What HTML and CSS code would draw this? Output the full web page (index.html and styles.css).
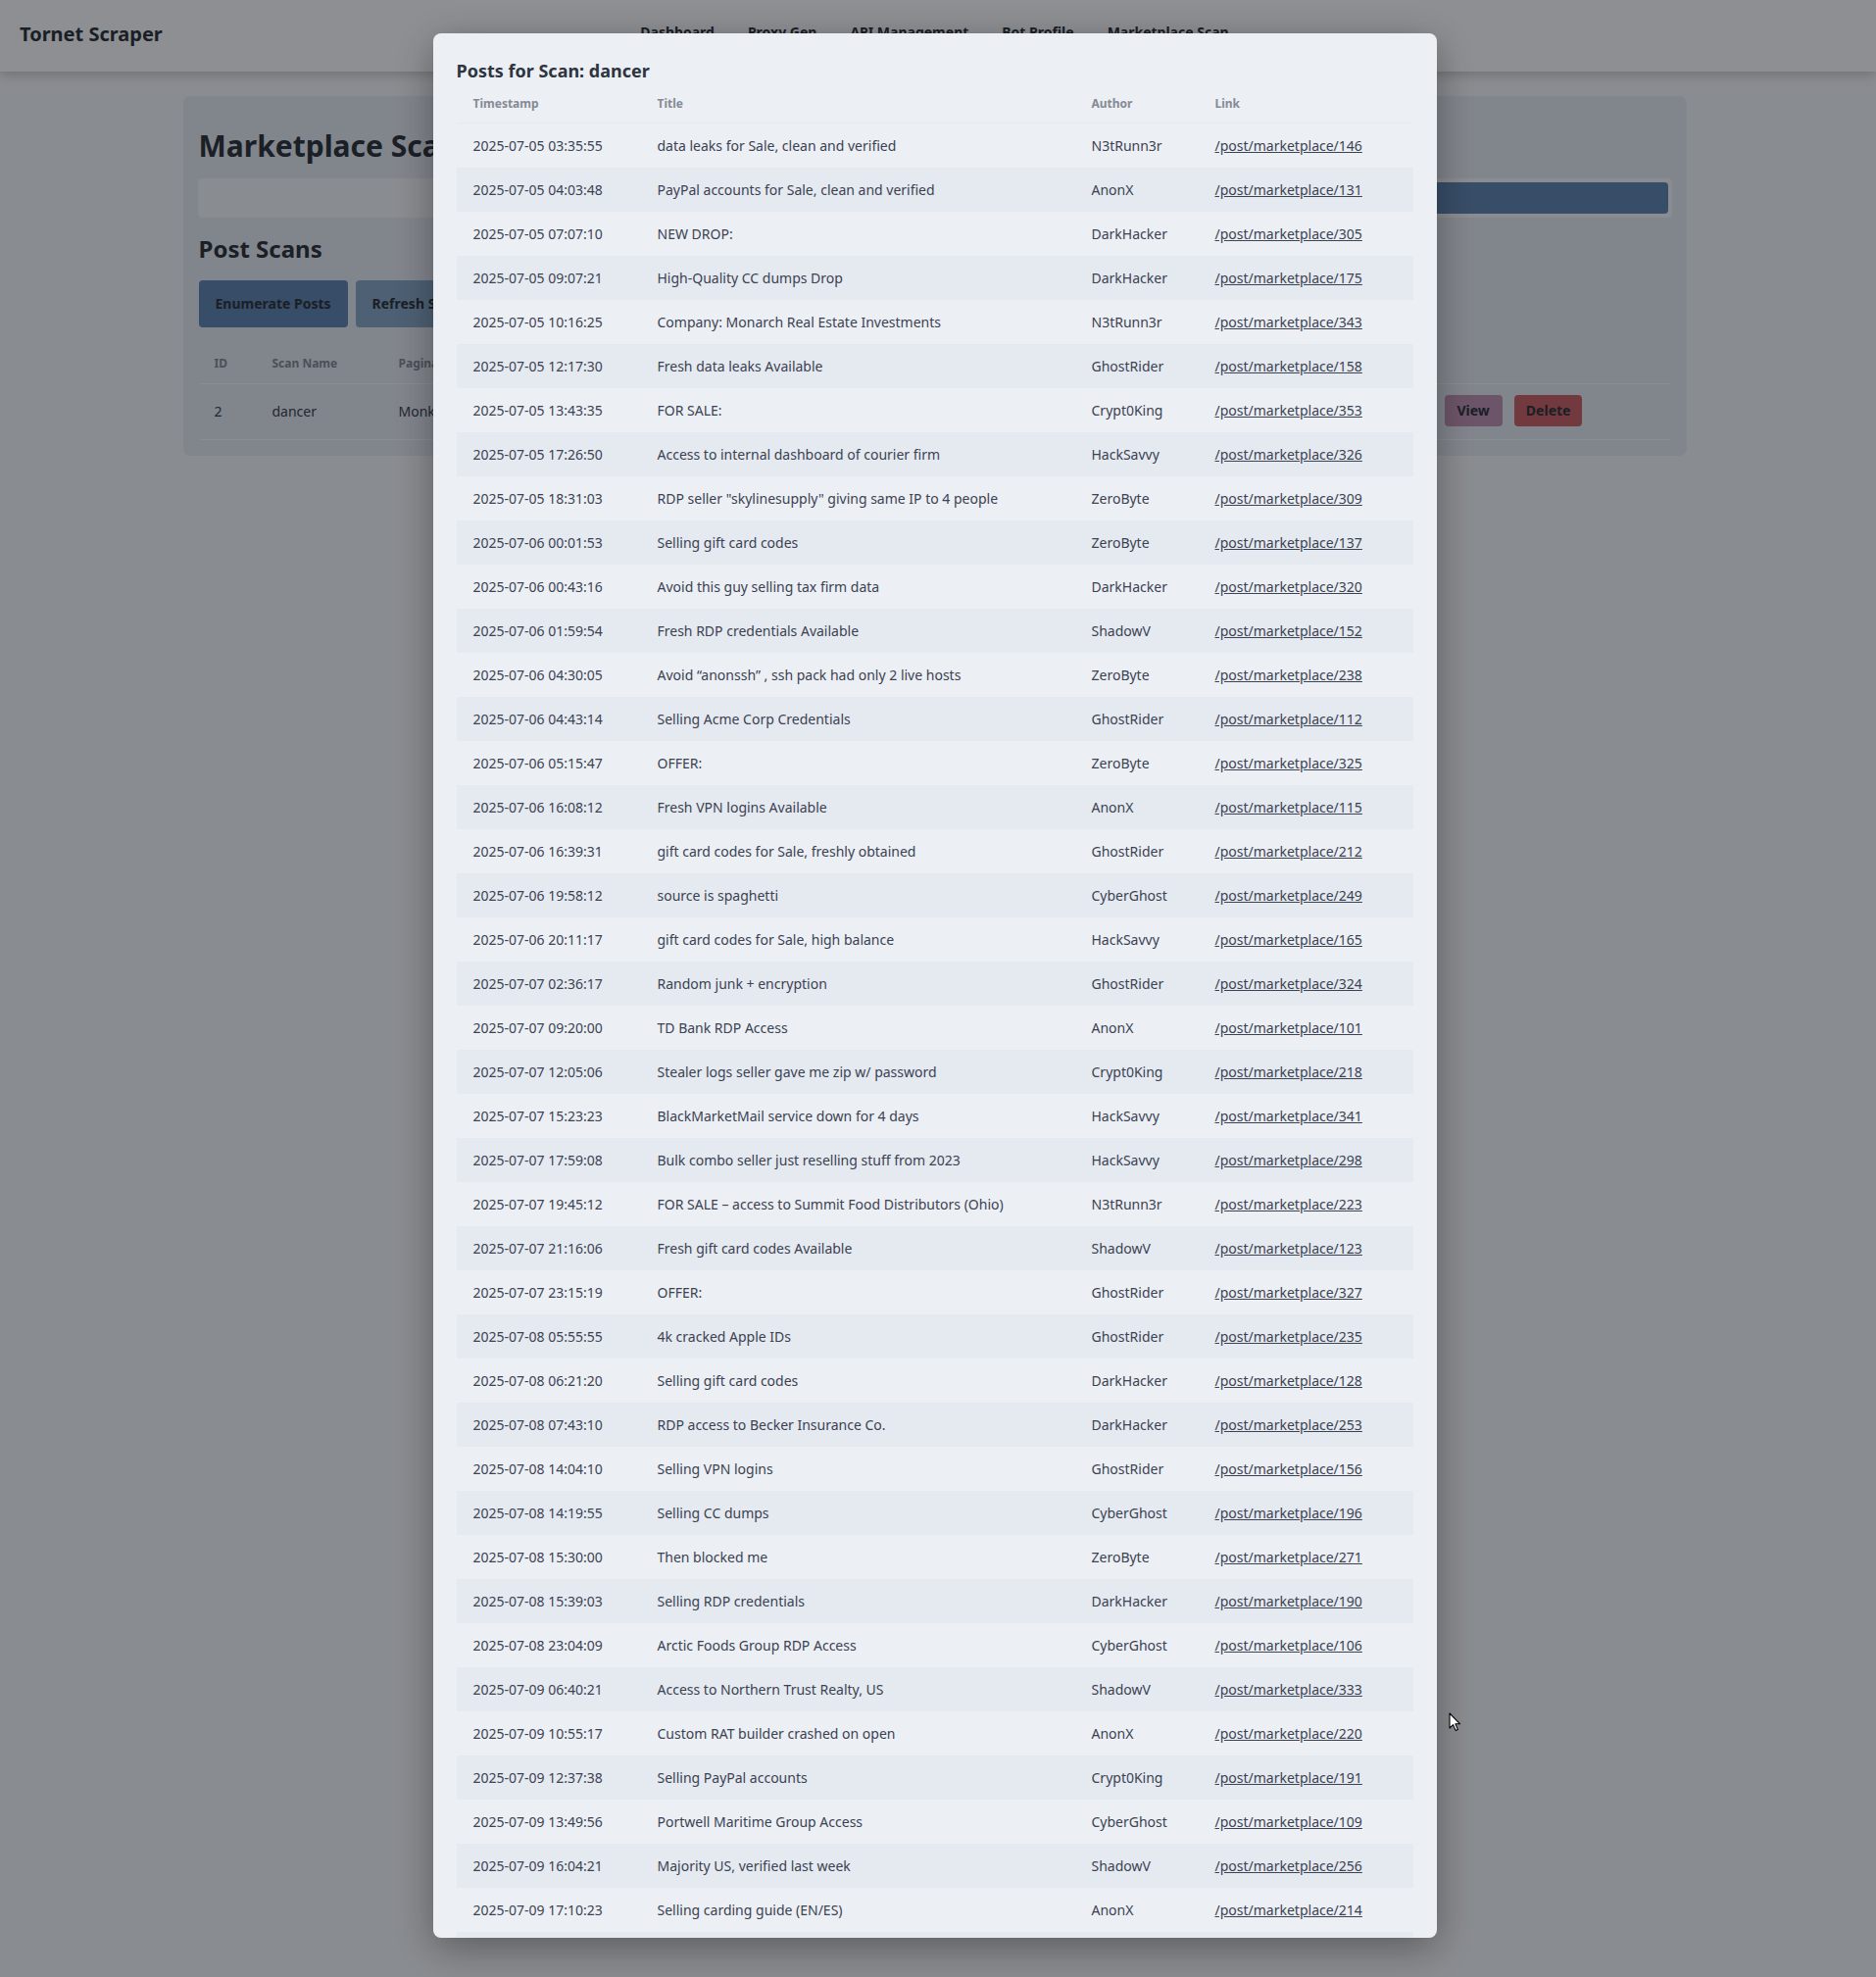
FILE: index.html
```html
<!DOCTYPE html>
<html lang="en">
<head>
<meta charset="utf-8">
<title>Tornet Scraper - Marketplace Scan</title>
<link rel="stylesheet" href="styles.css">
</head>
<body>
<header class="app-header">
  <div class="logo">Tornet Scraper</div>
  <nav class="nav">
    <a href="#">Dashboard</a>
    <a href="#">Proxy Gen</a>
    <a href="#">API Management</a>
    <a href="#">Bot Profile</a>
    <a href="#">Marketplace Scan</a>
  </nav>
  <div class="header-spacer"></div>
</header>

<main class="main">
  <section class="card">
    <h1 class="page-title">Marketplace Scan</h1>
    <div class="scan-form">
      <div class="scan-input"></div>
      <button class="scan-submit">Create Scan</button>
    </div>
    <h2 class="section-title">Post Scans</h2>
    <div class="actions">
      <button class="btn btn-primary">Enumerate Posts</button>
      <button class="btn btn-secondary">Refresh Scans</button>
    </div>
    <table class="scan-table">
      <colgroup>
        <col class="c-id"><col class="c-name"><col class="c-pag"><col class="c-pages"><col class="c-status"><col class="c-created"><col class="c-actions">
      </colgroup>
      <thead>
        <tr><th>ID</th><th>Scan Name</th><th>Pagination Site</th><th>Pages</th><th>Status</th><th>Created</th><th></th></tr>
      </thead>
      <tbody>
        <tr>
          <td>2</td><td>dancer</td><td>Monkey Market</td><td>10</td><td>completed</td><td>2025-07-09 18:02:11</td>
          <td><div class="row-actions"><button class="btn-sm btn-view">View</button><button class="btn-sm btn-delete">Delete</button></div></td>
        </tr>
      </tbody>
    </table>
  </section>
</main>

<div class="overlay">
  <div class="modal">
    <h3 class="modal-title">Posts for Scan: dancer</h3>
    <table class="posts-table">
      <colgroup>
        <col class="p-time"><col class="p-title"><col class="p-author"><col class="p-link">
      </colgroup>
      <thead>
        <tr><th>Timestamp</th><th>Title</th><th>Author</th><th>Link</th></tr>
      </thead>
      <tbody>
        <tr><td>2025-07-05 03:35:55</td><td>data leaks for Sale, clean and verified</td><td>N3tRunn3r</td><td><a href="#">/post/marketplace/146</a></td></tr>
        <tr><td>2025-07-05 04:03:48</td><td>PayPal accounts for Sale, clean and verified</td><td>AnonX</td><td><a href="#">/post/marketplace/131</a></td></tr>
        <tr><td>2025-07-05 07:07:10</td><td>NEW DROP:</td><td>DarkHacker</td><td><a href="#">/post/marketplace/305</a></td></tr>
        <tr><td>2025-07-05 09:07:21</td><td>High-Quality CC dumps Drop</td><td>DarkHacker</td><td><a href="#">/post/marketplace/175</a></td></tr>
        <tr><td>2025-07-05 10:16:25</td><td>Company: Monarch Real Estate Investments</td><td>N3tRunn3r</td><td><a href="#">/post/marketplace/343</a></td></tr>
        <tr><td>2025-07-05 12:17:30</td><td>Fresh data leaks Available</td><td>GhostRider</td><td><a href="#">/post/marketplace/158</a></td></tr>
        <tr><td>2025-07-05 13:43:35</td><td>FOR SALE:</td><td>Crypt0King</td><td><a href="#">/post/marketplace/353</a></td></tr>
        <tr><td>2025-07-05 17:26:50</td><td>Access to internal dashboard of courier firm</td><td>HackSavvy</td><td><a href="#">/post/marketplace/326</a></td></tr>
        <tr><td>2025-07-05 18:31:03</td><td>RDP seller "skylinesupply" giving same IP to 4 people</td><td>ZeroByte</td><td><a href="#">/post/marketplace/309</a></td></tr>
        <tr><td>2025-07-06 00:01:53</td><td>Selling gift card codes</td><td>ZeroByte</td><td><a href="#">/post/marketplace/137</a></td></tr>
        <tr><td>2025-07-06 00:43:16</td><td>Avoid this guy selling tax firm data</td><td>DarkHacker</td><td><a href="#">/post/marketplace/320</a></td></tr>
        <tr><td>2025-07-06 01:59:54</td><td>Fresh RDP credentials Available</td><td>ShadowV</td><td><a href="#">/post/marketplace/152</a></td></tr>
        <tr><td>2025-07-06 04:30:05</td><td>Avoid “anonssh” , ssh pack had only 2 live hosts</td><td>ZeroByte</td><td><a href="#">/post/marketplace/238</a></td></tr>
        <tr><td>2025-07-06 04:43:14</td><td>Selling Acme Corp Credentials</td><td>GhostRider</td><td><a href="#">/post/marketplace/112</a></td></tr>
        <tr><td>2025-07-06 05:15:47</td><td>OFFER:</td><td>ZeroByte</td><td><a href="#">/post/marketplace/325</a></td></tr>
        <tr><td>2025-07-06 16:08:12</td><td>Fresh VPN logins Available</td><td>AnonX</td><td><a href="#">/post/marketplace/115</a></td></tr>
        <tr><td>2025-07-06 16:39:31</td><td>gift card codes for Sale, freshly obtained</td><td>GhostRider</td><td><a href="#">/post/marketplace/212</a></td></tr>
        <tr><td>2025-07-06 19:58:12</td><td>source is spaghetti</td><td>CyberGhost</td><td><a href="#">/post/marketplace/249</a></td></tr>
        <tr><td>2025-07-06 20:11:17</td><td>gift card codes for Sale, high balance</td><td>HackSavvy</td><td><a href="#">/post/marketplace/165</a></td></tr>
        <tr><td>2025-07-07 02:36:17</td><td>Random junk + encryption</td><td>GhostRider</td><td><a href="#">/post/marketplace/324</a></td></tr>
        <tr><td>2025-07-07 09:20:00</td><td>TD Bank RDP Access</td><td>AnonX</td><td><a href="#">/post/marketplace/101</a></td></tr>
        <tr><td>2025-07-07 12:05:06</td><td>Stealer logs seller gave me zip w/ password</td><td>Crypt0King</td><td><a href="#">/post/marketplace/218</a></td></tr>
        <tr><td>2025-07-07 15:23:23</td><td>BlackMarketMail service down for 4 days</td><td>HackSavvy</td><td><a href="#">/post/marketplace/341</a></td></tr>
        <tr><td>2025-07-07 17:59:08</td><td>Bulk combo seller just reselling stuff from 2023</td><td>HackSavvy</td><td><a href="#">/post/marketplace/298</a></td></tr>
        <tr><td>2025-07-07 19:45:12</td><td>FOR SALE – access to Summit Food Distributors (Ohio)</td><td>N3tRunn3r</td><td><a href="#">/post/marketplace/223</a></td></tr>
        <tr><td>2025-07-07 21:16:06</td><td>Fresh gift card codes Available</td><td>ShadowV</td><td><a href="#">/post/marketplace/123</a></td></tr>
        <tr><td>2025-07-07 23:15:19</td><td>OFFER:</td><td>GhostRider</td><td><a href="#">/post/marketplace/327</a></td></tr>
        <tr><td>2025-07-08 05:55:55</td><td>4k cracked Apple IDs</td><td>GhostRider</td><td><a href="#">/post/marketplace/235</a></td></tr>
        <tr><td>2025-07-08 06:21:20</td><td>Selling gift card codes</td><td>DarkHacker</td><td><a href="#">/post/marketplace/128</a></td></tr>
        <tr><td>2025-07-08 07:43:10</td><td>RDP access to Becker Insurance Co.</td><td>DarkHacker</td><td><a href="#">/post/marketplace/253</a></td></tr>
        <tr><td>2025-07-08 14:04:10</td><td>Selling VPN logins</td><td>GhostRider</td><td><a href="#">/post/marketplace/156</a></td></tr>
        <tr><td>2025-07-08 14:19:55</td><td>Selling CC dumps</td><td>CyberGhost</td><td><a href="#">/post/marketplace/196</a></td></tr>
        <tr><td>2025-07-08 15:30:00</td><td>Then blocked me</td><td>ZeroByte</td><td><a href="#">/post/marketplace/271</a></td></tr>
        <tr><td>2025-07-08 15:39:03</td><td>Selling RDP credentials</td><td>DarkHacker</td><td><a href="#">/post/marketplace/190</a></td></tr>
        <tr><td>2025-07-08 23:04:09</td><td>Arctic Foods Group RDP Access</td><td>CyberGhost</td><td><a href="#">/post/marketplace/106</a></td></tr>
        <tr><td>2025-07-09 06:40:21</td><td>Access to Northern Trust Realty, US</td><td>ShadowV</td><td><a href="#">/post/marketplace/333</a></td></tr>
        <tr><td>2025-07-09 10:55:17</td><td>Custom RAT builder crashed on open</td><td>AnonX</td><td><a href="#">/post/marketplace/220</a></td></tr>
        <tr><td>2025-07-09 12:37:38</td><td>Selling PayPal accounts</td><td>Crypt0King</td><td><a href="#">/post/marketplace/191</a></td></tr>
        <tr><td>2025-07-09 13:49:56</td><td>Portwell Maritime Group Access</td><td>CyberGhost</td><td><a href="#">/post/marketplace/109</a></td></tr>
        <tr><td>2025-07-09 16:04:21</td><td>Majority US, verified last week</td><td>ShadowV</td><td><a href="#">/post/marketplace/256</a></td></tr>
        <tr><td>2025-07-09 17:10:23</td><td>Selling carding guide (EN/ES)</td><td>AnonX</td><td><a href="#">/post/marketplace/214</a></td></tr>
        <tr><td>2025-07-09 19:22:41</td><td>Fresh CC dumps Available</td><td>DarkHacker</td><td><a href="#">/post/marketplace/187</a></td></tr>
        <tr><td>2025-07-09 21:48:02</td><td>Selling VPN logins</td><td>ZeroByte</td><td><a href="#">/post/marketplace/264</a></td></tr>
      </tbody>
    </table>
  </div>
</div>

<svg class="cursor" width="13" height="20" viewBox="0 0 13 20" aria-hidden="true">
  <path d="M1 1 L1 16 L4.6 12.6 L7.2 18.6 L9.4 17.6 L6.9 11.8 L11.6 11.8 Z" fill="#ffffff" stroke="#000000" stroke-width="1.1" stroke-linejoin="round"/>
</svg>
</body>
</html>
```

FILE: styles.css
```css
* {
  box-sizing: border-box;
}

html, body {
  margin: 0;
  padding: 0;
}

body {
  font-family: "Noto Sans", "Open Sans", sans-serif;
  background: #e5e9f0;
  color: #2e3440;
  min-height: 100vh;
  overflow: hidden;
}

/* ---------- header ---------- */
.app-header {
  height: 73px;
  background: #eceff4;
  box-shadow: 0 2px 12px rgba(0, 0, 0, 0.22);
  display: grid;
  grid-template-columns: 1fr auto 1fr;
  align-items: center;
  padding: 0 27px 5px 20px;
  position: relative;
  z-index: 1;
}

.logo {
  font-size: 20px;
  font-weight: 700;
  line-height: 27px;
  color: #2e3440;
}

.nav {
  display: flex;
  gap: 34px;
  padding-bottom: 2px;
}

.nav a {
  font-size: 14px;
  font-weight: 700;
  line-height: 20px;
  color: #2e3440;
  text-decoration: none;
}

/* ---------- page ---------- */
.main {
  padding: 25px 7px 0 0;
}

.card {
  max-width: 1534px;
  margin: 0 auto;
  background: #d8dee9;
  border-radius: 8px;
  padding: 16px;
}

.page-title {
  font-size: 30px;
  font-weight: 700;
  line-height: 44px;
  margin: 13px 0 11px;
  color: #2e3440;
}

.scan-form {
  display: flex;
  height: 40px;
  padding: 4px;
  background: #e5e9f0;
  border-radius: 4px;
  margin: 0 -1px;
}

.scan-input {
  flex: 1;
}

.scan-submit {
  flex: 0 0 62%;
  border: 0;
  border-radius: 4px;
  background: #5e81ac;
  color: #2e3440;
  font: 700 14px/20px "Noto Sans", sans-serif;
}

.section-title {
  font-size: 24px;
  font-weight: 700;
  line-height: 32px;
  margin: 16px 0;
  color: #2e3440;
}

.actions {
  display: flex;
  gap: 8px;
  margin-bottom: 17px;
}

.btn {
  border: 0;
  border-radius: 4px;
  padding: 14px 17px;
  font: 700 14px/20px "Noto Sans", sans-serif;
  color: #2e3440;
}

.btn-primary {
  background: #5e81ac;
}

.btn-secondary {
  background: #81a1c1;
}

.scan-table {
  width: 100%;
  border-collapse: collapse;
  table-layout: fixed;
}

.c-id { width: 59px; }
.c-name { width: 129px; }
.c-pag { width: 300px; }
.c-pages { width: 200px; }
.c-status { width: 200px; }
.c-created { width: 367px; }
.c-actions { width: 247px; }

.scan-table th {
  text-align: left;
  font-size: 12px;
  font-weight: 700;
  line-height: 18px;
  color: #7d8593;
  padding: 11px 16px;
  border-bottom: 1px solid #e5e9f0;
  white-space: nowrap;
  overflow: hidden;
}

.scan-table td {
  font-size: 14px;
  line-height: 21px;
  color: #3b4252;
  padding: 11px 16px 13px;
  border-bottom: 1px solid #e5e9f0;
  vertical-align: middle;
  white-space: nowrap;
  overflow: hidden;
}

.row-actions {
  display: flex;
  gap: 12px;
}

.btn-sm {
  border: 0;
  border-radius: 4px;
  padding: 6px 12px;
  font: 700 14px/20px "Noto Sans", sans-serif;
  color: #2e3440;
}

.btn-view {
  background: #b48ead;
  padding: 6px 13px;
}

.btn-delete {
  background: #bf616a;
}

/* ---------- modal ---------- */
.overlay {
  position: fixed;
  inset: 0;
  background: rgba(0, 0, 0, 0.4);
  display: flex;
  justify-content: center;
  align-items: flex-start;
  padding: 34px 7px 40px 0;
  z-index: 10;
}

.modal {
  width: 1024px;
  max-height: 100%;
  overflow-y: auto;
  scrollbar-width: none;
  background: #eceff4;
  border-radius: 8px;
  padding: 25px 24px 24px;
  box-shadow: 0 10px 40px rgba(0, 0, 0, 0.35);
}

.modal::-webkit-scrollbar {
  display: none;
}

.modal-title {
  font-size: 18px;
  font-weight: 700;
  line-height: 27px;
  margin: 0;
  color: #2e3440;
}

.posts-table {
  width: 100%;
  border-collapse: collapse;
  table-layout: fixed;
}

.p-time { width: 188px; }
.p-title { width: 443px; }
.p-author { width: 126px; }
.p-link { width: 219px; }

.posts-table th {
  text-align: left;
  font-size: 12px;
  font-weight: 700;
  line-height: 18px;
  color: #858a94;
  padding: 11px 13px 10px 17px;
  border-bottom: 1px solid #e5e9f0;
}

.posts-table td {
  font-size: 14px;
  line-height: 21px;
  color: #3b4252;
  padding: 12px 13px 12px 17px;
  white-space: nowrap;
}

.posts-table tbody tr:nth-child(even) {
  background: #e5e9f0;
}

.posts-table a {
  color: #3b4252;
  text-decoration: underline;
}

/* pointer that lies over the overlay */
.cursor {
  position: fixed;
  left: 1478px;
  top: 1747px;
  z-index: 20;
}
```
